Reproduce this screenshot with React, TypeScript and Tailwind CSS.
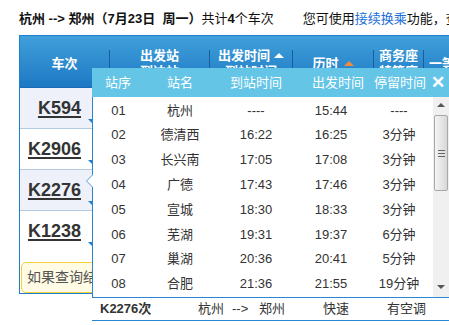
import React from "react";

const font = "font-['Liberation_Sans','Noto_Sans_CJK_SC',sans-serif]";

const trains = [
  { code: "K594", shaded: true },
  { code: "K2906", shaded: false },
  { code: "K2276", shaded: true },
  { code: "K1238", shaded: false },
];

const stops = [
  ["01", "杭州", "----", "15:44", "----"],
  ["02", "德清西", "16:22", "16:25", "3分钟"],
  ["03", "长兴南", "17:05", "17:08", "3分钟"],
  ["04", "广德", "17:43", "17:46", "3分钟"],
  ["05", "宣城", "18:30", "18:33", "3分钟"],
  ["06", "芜湖", "19:31", "19:37", "6分钟"],
  ["07", "巢湖", "20:36", "20:41", "5分钟"],
  ["08", "合肥", "21:36", "21:55", "19分钟"],
];

function Divider() {
  return <div className="h-[24px] w-px bg-[#1b5c9c]" />;
}

function HeadCell({ className, children }: { className: string; children: React.ReactNode }) {
  return (
    <div className={`flex flex-col items-center justify-center whitespace-nowrap pt-[4px] leading-[16px] ${className}`}>
      {children}
    </div>
  );
}

function StopTimes() {
  return (
    <div className="absolute left-[92px] top-[68px] w-[370px] bg-white text-[13px]">
      {/* pointer towards the selected train */}
      <div className="absolute left-[-6px] top-[106px] h-0 w-0 border-y-[7px] border-r-[7px] border-y-transparent border-r-[#4f9fdc]" />
      <div className="absolute left-[-5px] top-[107px] h-0 w-0 border-y-[6px] border-r-[6px] border-y-transparent border-r-white" />

      <div className="flex h-[29px] items-center bg-[#64c5e7] text-white">
        <div className="flex w-[52px] justify-center whitespace-nowrap">站序</div>
        <div className="flex w-[72px] justify-center whitespace-nowrap">站名</div>
        <div className="flex w-[80px] justify-center whitespace-nowrap">到站时间</div>
        <div className="flex w-[84px] justify-center whitespace-nowrap">出发时间</div>
        <div className="flex w-[40px] justify-center whitespace-nowrap">停留时间</div>
        <div className="pl-[11px] text-[17px] font-bold leading-none">✕</div>
      </div>

      <div className="flex h-[200px] border-l border-[#2b86d2]">
        <div className="flex w-[340px] flex-col pt-[1px] text-[#333]">
          {stops.map((s) => (
            <div key={s[0]} className="flex h-[24.8px] shrink-0 items-center whitespace-nowrap">
              <div className="flex w-[51px] justify-center">{s[0]}</div>
              <div className="flex w-[72px] justify-center">{s[1]}</div>
              <div className="flex w-[80px] justify-center">{s[2]}</div>
              <div className="flex w-[70px] justify-center">{s[3]}</div>
              <div className="flex w-[66px] justify-center">{s[4]}</div>
            </div>
          ))}
        </div>
        <div className="flex w-[16px] flex-col items-center bg-[#f0f0f0]">
          <div className="mt-[6px] h-0 w-0 border-x-[4px] border-b-[4px] border-x-transparent border-b-[#555]" />
          <div className="mt-[8px] flex h-[76px] w-[14px] flex-col items-center justify-center gap-[2px] rounded-[2px] border border-[#a8a8a8] bg-gradient-to-r from-[#f4f4f4] to-[#d8d8d8]">
            <div className="h-px w-[7px] bg-[#666]" />
            <div className="h-px w-[7px] bg-[#666]" />
            <div className="h-px w-[7px] bg-[#666]" />
          </div>
          <div className="mt-auto mb-[8px] h-0 w-0 border-x-[4px] border-t-[4px] border-x-transparent border-t-[#555]" />
        </div>
      </div>

      <div className="flex h-[24px] items-center whitespace-nowrap border-y border-[#2b86d2] text-[#333]">
        <div className="w-[106px] pl-[8px] font-bold">K2276次</div>
        <div className="w-[34px]">杭州</div>
        <div className="w-[27px]">--&gt;</div>
        <div className="w-[64px]">郑州</div>
        <div className="w-[64px]">快速</div>
        <div>有空调</div>
      </div>
    </div>
  );
}

export default function App() {
  return (
    <div className={`relative h-[325px] w-[449px] overflow-hidden bg-white ${font}`}>
      <div className="flex whitespace-nowrap pl-[19px] pt-[11px] text-[13px] leading-[16px] text-[#111]">
        <span className="font-bold">杭州 --&gt; 郑州（7月23日&nbsp;&nbsp;周一）</span>
        <span>共计<b>4</b>个车次</span>
        <span className="pl-[29px]">
          您可使用<span className="text-[#1a6fd8]">接续换乘</span>功能，查询途中换乘一次的部分列车余票情况。
        </span>
      </div>

      <div className="ml-[19px] mt-[8px] w-[520px] border-l border-t border-[#1e7fd0]">
        <div className="flex h-[52px] items-center border-b border-[#1a6cb4] bg-gradient-to-b from-[#40a0da] to-[#1d78c4] text-[13px] font-bold text-white">
          <HeadCell className="w-[89px]">
            <span>车次</span>
          </HeadCell>
          <Divider />
          <HeadCell className="w-[99px]">
            <span>出发站</span>
            <span>到达站</span>
          </HeadCell>
          <Divider />
          <HeadCell className="w-[82px]">
            <span className="flex items-center gap-[4px]">
              出发时间
              <span className="h-0 w-0 border-x-[5px] border-b-[5px] border-x-transparent border-b-white" />
            </span>
            <span>到站时间</span>
          </HeadCell>
          <Divider />
          <HeadCell className="w-[80px]">
            <span className="flex items-center gap-[5px]">
              历时
              <span className="h-0 w-0 border-x-[5px] border-b-[5px] border-x-transparent border-b-[#f28a3a]" />
            </span>
          </HeadCell>
          <Divider />
          <HeadCell className="w-[49px]">
            <span>商务座</span>
            <span>特等座</span>
          </HeadCell>
          <Divider />
          <HeadCell className="w-[49px]">
            <span>一等座</span>
          </HeadCell>
        </div>

        {trains.map((t, i) => (
          <div
            key={t.code}
            className={`flex h-[41px] items-center ${i < 3 ? "border-b border-[#b3cbe0]" : ""} ${t.shaded ? "bg-[#eef1fa]" : "bg-white"}`}
          >
            <div className="relative flex w-[61px] justify-end">
              <span className="text-[18px] font-bold text-[#333] underline decoration-[2px] underline-offset-[2px]">
                {t.code}
              </span>
              <span className="absolute right-[-11px] bottom-[-1px] h-0 w-0 border-l-[4px] border-t-[4px] border-l-transparent border-t-[#1e7fd0]" />
            </div>
          </div>
        ))}

        <div className="flex h-[42px] flex-col justify-end border-b border-[#1e7fd0]">
          <div className="ml-[1px] flex h-[31px] items-center rounded-[5px] border border-[#f3d03c] bg-[#fffbe4] pl-[5px] text-[14px] text-[#555]">
            如果查询结果中没有满足需求的车次
          </div>
        </div>
      </div>

      <StopTimes />
    </div>
  );
}
